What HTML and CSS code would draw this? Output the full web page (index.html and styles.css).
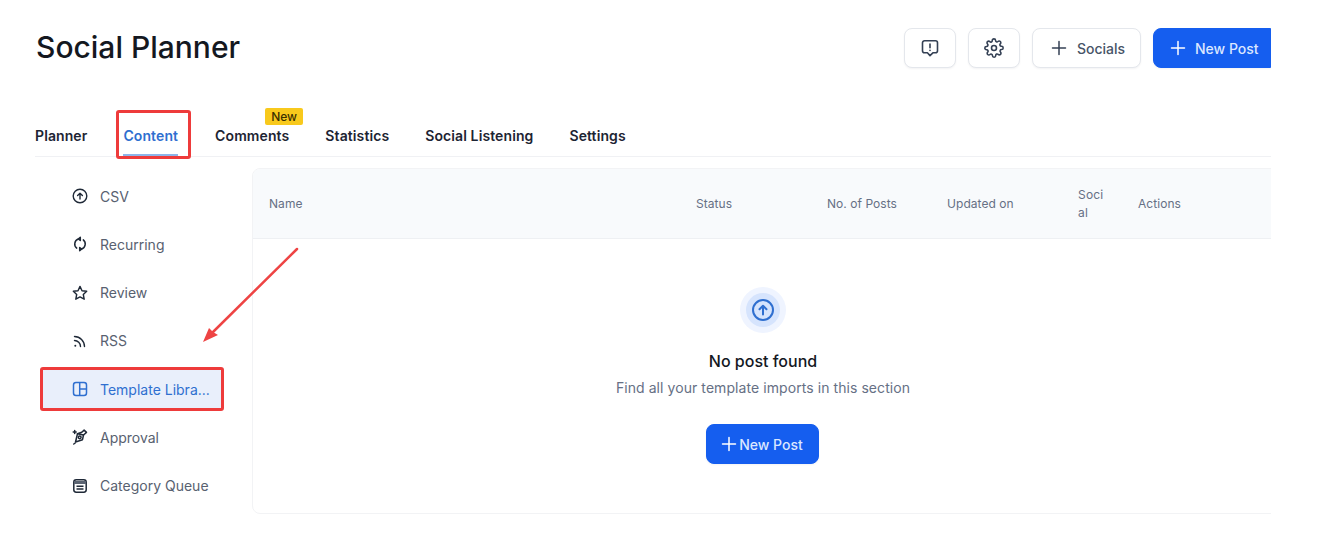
FILE: index.html

```html
<!DOCTYPE html>
<html lang="en">
<head>
    <meta charset="UTF-8">
    <meta name="viewport" content="width=device-width, initial-scale=1.0">
    <title>Social Planner</title>
    <link rel="stylesheet" href="styles.css">
</head>
<body>
    <div class="page">
        <header class="top">
            <h1>Social Planner</h1>
            <div class="top-actions">
                <button class="btn btn-icon" aria-label="Feedback">
                    <svg width="20" height="20" viewBox="0 0 20 20" fill="none" stroke="#344054" stroke-width="1.6" stroke-linecap="round" stroke-linejoin="round"><path d="M4.5 2.8h11a2 2 0 0 1 2 2v8a2 2 0 0 1-2 2h-2.6L10 17.6l-2.6-2.8H4.500a2 2 0 0 1-2-2v-8a2 2 0 0 1 2-2z"/><path d="M10 6v3.800M10 12.300v.1"/></svg>
                </button>
                <button class="btn btn-icon" aria-label="Settings">
                    <svg width="20" height="20" viewBox="0 0 24 24" fill="none" stroke="#344054" stroke-width="1.900" stroke-linecap="round" stroke-linejoin="round"><circle cx="12" cy="12" r="3"/><path d="M19.400 15a1.650 1.650 0 0 0 .33 1.820l.06.06a2 2 0 1 1-2.830 2.830l-.06-.06a1.650 1.650 0 0 0-2.800 1.170V21a2 2 0 1 1-4 0v-.09A1.650 1.650 0 0 0 7.300 19.740l-.06.06a2 2 0 1 1-2.830-2.830l.06-.06a1.650 1.650 0 0 0-1.170-2.800H3a2 2 0 1 1 0-4h.09A1.650 1.650 0 0 0 4.260 7.300l-.06-.06a2 2 0 1 1 2.830-2.830l.06.06a1.650 1.650 0 0 0 2.800-1.170V3a2 2 0 1 1 4 0v.09a1.650 1.650 0 0 0 2.800 1.170l.06-.06a2 2 0 1 1 2.830 2.830l-.06.06a1.650 1.650 0 0 0 1.170 2.800H21a2 2 0 1 1 0 4h-.09a1.650 1.650 0 0 0-1.510 1z"/></svg>
                </button>
                <button class="btn btn-socials">
                    <svg width="16" height="16" viewBox="0 0 16 16" fill="none" stroke="#344054" stroke-width="1.500" stroke-linecap="round"><path d="M8 1.500v13M1.500 8h13"/></svg>
                    Socials
                </button>
                <button class="btn btn-primary btn-top-new">
                    <svg width="16" height="16" viewBox="0 0 16 16" fill="none" stroke="#fff" stroke-width="1.500" stroke-linecap="round"><path d="M8 1.500v13M1.500 8h13"/></svg>
                    New Post
                </button>
            </div>
        </header>

        <nav class="tabs">
            <a class="tab">Planner</a>
            <a class="tab tab-active">Content</a>
            <a class="tab">Comments<span class="badge">New</span></a>
            <a class="tab">Statistics</a>
            <a class="tab">Social Listening</a>
            <a class="tab">Settings</a>
        </nav>

        <div class="body-row">
            <aside class="side">
                <a class="side-item">
                    <svg width="16" height="16" viewBox="0 0 16 16" fill="none" stroke="#1f2937" stroke-width="1.400" stroke-linecap="round" stroke-linejoin="round"><circle cx="8" cy="8" r="6.800"/><path d="M8 11V5.300M5.600 7.600 8 5.200l2.400 2.400"/></svg>
                    <span>CSV</span>
                </a>
                <a class="side-item">
                    <svg width="16" height="16" viewBox="0 0 16 16" fill="none" stroke="#1f2937" stroke-width="1.500" stroke-linecap="round" stroke-linejoin="round"><path d="M6.300 3a5.300 5.300 0 0 0-1.600 9.100M9.700 13a5.300 5.300 0 0 0 1.600-9.100"/><path d="M8.300 1.300 6.300 3l2 1.500zM7.700 14.700l2-1.700-2-1.500z" fill="#1f2937"/></svg>
                    <span>Recurring</span>
                </a>
                <a class="side-item">
                    <svg width="16" height="16" viewBox="0 0 16 16" fill="none" stroke="#1f2937" stroke-width="1.400" stroke-linejoin="round"><path d="m8 1.400 2 4.300 4.700.6-3.400 3.200.9 4.700L8 11.900l-4.200 2.300.9-4.700L1.300 6.300 6 5.700z"/></svg>
                    <span>Review</span>
                </a>
                <a class="side-item">
                    <svg width="16" height="16" viewBox="0 0 16 16" fill="none" stroke="#1f2937" stroke-width="1.400" stroke-linecap="round"><path d="M2.500 3.500c5.500 0 10 4.500 10 10M2.500 7.500c3.300 0 6 2.700 6 6"/><circle cx="3.300" cy="12.700" r="1" fill="#1f2937" stroke="none"/></svg>
                    <span>RSS</span>
                </a>
                <a class="side-item side-active">
                    <svg width="16" height="16" viewBox="0 0 16 16" fill="none" stroke="#2f6fd0" stroke-width="1.500" stroke-linejoin="round"><rect x="1.500" y="1.500" width="13" height="13" rx="2.500"/><path d="M7.700 1.500v13M7.700 8h6.800"/></svg>
                    <span>Template Libra...</span>
                </a>
                <a class="side-item">
                    <svg width="16" height="16" viewBox="0 0 16 16" fill="none" stroke="#1f2937" stroke-width="1.500" stroke-linejoin="round" stroke-linecap="round"><path d="M5.500 4.800 11.500 6l3-2.600-2.400-2.300-2.300 2.100z"/><path d="M5.500 4.800 3.500 13l7-2.300 1-4.700"/><circle cx="7.700" cy="8.300" r="1.400"/><path d="M3.200 14 1.800 15M2.700 1.500v3M1.200 3h3"/></svg>
                    <span>Approval</span>
                </a>
                <a class="side-item">
                    <svg width="16" height="16" viewBox="0 0 16 16" fill="none" stroke="#1f2937" stroke-width="1.500"><rect x="1.800" y="1.800" width="12.400" height="12.400" rx="2.400"/><path d="M2 4.500h12" stroke-width="3" stroke="#5b6472"/><path d="M4.500 8.300h7M4.500 11h7"/></svg>
                    <span>Category Queue</span>
                </a>
            </aside>

            <section class="card">
                <div class="thead">
                    <div>Name</div>
                    <div>Status</div>
                    <div>No. of Posts</div>
                    <div>Updated on</div>
                    <div class="th-social">Soci al</div>
                    <div>Actions</div>
                </div>
                <div class="empty">
                    <div class="empty-ring">
                        <div class="empty-ring-inner">
                            <svg width="24" height="24" viewBox="0 0 24 24" fill="none" stroke="#2f6fd0" stroke-width="2" stroke-linecap="round" stroke-linejoin="round"><circle cx="12" cy="12" r="10"/><path d="M12 16.500V8M8.500 11.300 12 7.800l3.500 3.500"/></svg>
                        </div>
                    </div>
                    <h3>No post found</h3>
                    <p>Find all your template imports in this section</p>
                    <button class="btn btn-primary btn-empty-new">
                        <svg width="16" height="16" viewBox="0 0 16 16" fill="none" stroke="#fff" stroke-width="1.500" stroke-linecap="round"><path d="M8 1.500v13M1.500 8h13"/></svg>
                        New Post
                    </button>
                </div>
            </section>
        </div>
    </div>

    <!-- red annotations on top of the screenshot -->
    <div class="mark mark-content"></div>
    <div class="mark mark-template"></div>
    <svg class="arrow" width="110" height="110" viewBox="0 0 110 110" fill="none">
        <path d="M99 5 15 88" stroke="#ee4444" stroke-width="2.500" stroke-linecap="round"/>
        <path d="M5 98 11 84 15 88 20 91z" fill="#ee4444"/>
    </svg>
</body>
</html>
```

FILE: styles.css

```css
* {
    box-sizing: border-box;
}
html, body {
    margin: 0;
    height: 537px;
    overflow: hidden;
    background: #fff;
}
body {
    font-family: Inter, "Liberation Sans", sans-serif;
    color: #101828;
}
.page {
    width: 1236px;
    height: 537px;
    margin-left: 35px;
    overflow: hidden;
}
.top {
    display: flex;
    justify-content: space-between;
    align-items: center;
    height: 96px;
}
h1 {
    margin: 0 0 2px 1px;
    font-size: 30px;
    font-weight: 500;
    color: #14181f;
}
.top-actions {
    display: flex;
    gap: 12px;
}
.btn {
    display: flex;
    align-items: center;
    height: 40px;
    border: 1px solid #e4e7ec;
    border-radius: 8px;
    background: #fff;
    font-family: inherit;
    font-size: 14px;
    font-weight: 500;
    color: #475467;
    box-shadow: 0 1px 2px rgba(16, 24, 40, 0.05);
}
.btn-icon {
    justify-content: center;
    width: 52px;
    padding: 0;
}
.btn-socials {
    gap: 10px;
    width: 109px;
    padding: 0 0 0 18px;
}
.btn-primary {
    background: #155eef;
    border-color: #155eef;
    color: #dbe7ff;
}
.btn-top-new {
    gap: 9px;
    width: 118px;
    padding: 0 0 0 16px;
    border-radius: 8px 0 0 8px;
}
.tabs {
    display: flex;
    gap: 36px;
    height: 61px;
    padding-top: 31px;
    border-bottom: 1px solid #f0f1f4;
}
.tab {
    position: relative;
    height: 29px;
    font-size: 14px;
    line-height: 18px;
    font-weight: 600;
    letter-spacing: 0.1px;
    color: #1d2433;
}
.tab-active {
    margin-right: 1px;
    color: #2f6fd0;
    border-bottom: 2px solid #8db5ea;
}
.badge {
    position: absolute;
    top: -19px;
    left: 50px;
    width: 38px;
    height: 17px;
    border-radius: 2px;
    background: #f8c91c;
    font-size: 12px;
    line-height: 17px;
    font-weight: 500;
    letter-spacing: 0;
    text-align: center;
    color: #3a3000;
}
.body-row {
    display: flex;
    padding-top: 11px;
}
.side {
    flex: none;
    display: flex;
    flex-direction: column;
    gap: 6.300px;
    width: 217px;
    padding: 7px 0 0 6px;
}
.side-item {
    display: flex;
    align-items: center;
    gap: 12px;
    width: 182px;
    height: 42px;
    padding-left: 31px;
    font-size: 14px;
    color: #586170;
    white-space: nowrap;
}
.side-active {
    background: #e9effb;
    color: #2f6fd0;
}
.card {
    flex: none;
    width: 1100px;
    height: 346px;
    border: 1px solid #f2f3f5;
    border-radius: 8px;
    overflow: hidden;
}
.thead {
    display: grid;
    grid-template-columns: 427px 131px 120px 131px 60px 1fr;
    align-items: center;
    height: 70px;
    padding-left: 16px;
    background: #f8fafc;
    border-bottom: 1px solid #eef0f3;
    font-size: 12px;
    line-height: 18px;
    color: #667085;
    letter-spacing: 0.05px;
}
.th-social {
    width: 30px;
    letter-spacing: 0.2px;
    word-break: break-word;
}
.empty {
    display: flex;
    flex-direction: column;
    align-items: center;
    width: 1020px;
    padding-top: 48px;
}
.empty-ring {
    display: flex;
    align-items: center;
    justify-content: center;
    width: 46px;
    height: 46px;
    border-radius: 50%;
    background: #eff4ff;
}
.empty-ring-inner {
    display: flex;
    align-items: center;
    justify-content: center;
    width: 34px;
    height: 34px;
    border-radius: 50%;
    background: #d6e4fd;
}
h3 {
    margin: 17px 0 0;
    font-size: 16px;
    line-height: 22px;
    font-weight: 500;
    color: #14181f;
}
.empty p {
    margin: 6px 0 0;
    font-size: 14px;
    line-height: 20px;
    letter-spacing: 0.07px;
    color: #667085;
}
.btn-empty-new {
    justify-content: center;
    gap: 2px;
    width: 113px;
    margin: 26px 2px 0 0;
}
.mark {
    position: absolute;
    border: 3px solid #ee3b3b;
    border-radius: 3px;
}
.mark-content {
    left: 116px;
    top: 110px;
    width: 75px;
    height: 49px;
}
.mark-template {
    left: 40px;
    top: 367px;
    width: 184px;
    height: 44px;
}
.arrow {
    position: absolute;
    left: 198px;
    top: 244px;
}
```
